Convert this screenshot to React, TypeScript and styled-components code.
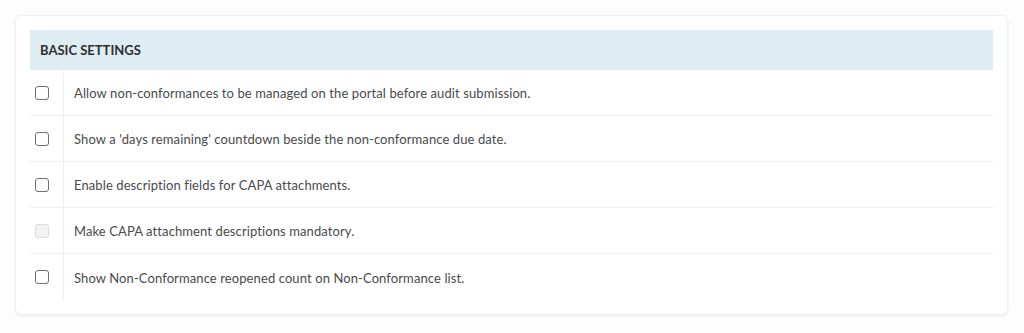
import * as React from 'react';
import styled, { createGlobalStyle } from 'styled-components';

const GlobalStyle = createGlobalStyle`
  html, body {
    margin: 0;
    padding: 0;
    background: #fdfdfd;
    font-family: Lato, 'Open Sans', sans-serif;
  }
`;

const Page = styled.div`
  padding: 15px 16px 18px 15px;
`;

const Card = styled.div`
  background: #fff;
  border-radius: 6px;
  border: 1px solid #f1f1f1;
  box-shadow: 0 1px 3px rgba(0, 0, 0, 0.08);
  padding: 14px 14px 14px 14px;
`;

const SectionHeader = styled.div`
  height: 40px;
  background: #deedf4;
  display: flex;
  align-items: center;
  padding-left: 10px;
  font-size: 13px;
  font-weight: 700;
  color: #2f2f2f;
  text-transform: uppercase;
`;

const Row = styled.div<{ last?: boolean }>`
  display: grid;
  grid-template-columns: 34px 1fr;
  height: 46px;
  border-bottom: ${p => (p.last ? 'none' : '1px solid #efefef')};
  box-sizing: border-box;
`;

const BoxCell = styled.div`
  display: flex;
  align-items: center;
  padding-left: 5px;
  border-right: 1px solid #efefef;
`;

const Box = styled.span<{ disabled?: boolean }>`
  width: 14px;
  height: 14px;
  box-sizing: border-box;
  border-radius: 3px;
  border: 1.5px solid ${p => (p.disabled ? '#dcdcdc' : '#6f6f6f')};
  background: ${p => (p.disabled ? '#f3f3f3' : '#fff')};
`;

const Label = styled.div`
  display: flex;
  align-items: center;
  padding: 1px 0 0 10px;
  font-size: 13px;
  letter-spacing: 0.1px;
  color: #4a4a4a;
`;

const settings = [
  { text: 'Allow non-conformances to be managed on the portal before audit submission.' },
  { text: "Show a 'days remaining' countdown beside the non-conformance due date." },
  { text: 'Enable description fields for CAPA attachments.' },
  { text: 'Make CAPA attachment descriptions mandatory.', disabled: true },
  { text: 'Show Non-Conformance reopened count on Non-Conformance list.' },
];

export default function App() {
  return (
    <>
      <GlobalStyle />
      <Page>
        <Card>
          <SectionHeader>Basic Settings</SectionHeader>
          {settings.map((s, i) => (
            <Row key={i} last={i === settings.length - 1}>
              <BoxCell>
                <Box disabled={s.disabled} />
              </BoxCell>
              <Label>{s.text}</Label>
            </Row>
          ))}
        </Card>
      </Page>
    </>
  );
}
